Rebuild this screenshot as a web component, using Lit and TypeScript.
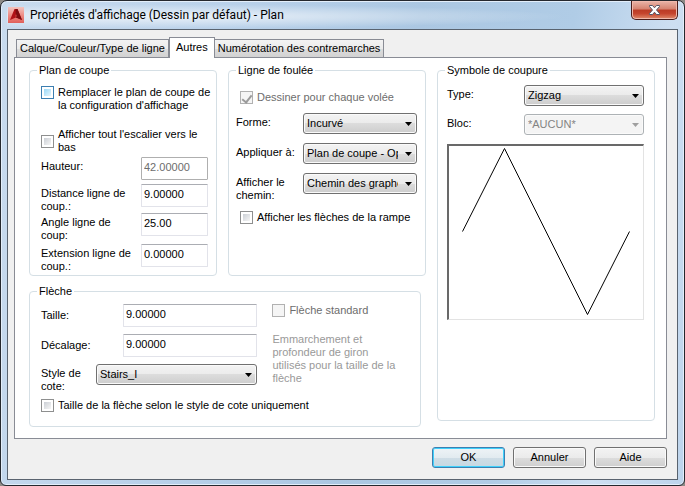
import { LitElement, html, css } from "lit";
import { customElement, property } from "lit/decorators.js";

const controls = css`
  * {
    box-sizing: border-box;
  }
  input,
  select,
  button {
    font: inherit;
    color: #000;
    margin: 0;
  }
`;

@customElement("check-option")
class CheckOption extends LitElement {
  @property() label = "";
  @property({ type: Boolean }) checked = false;
  @property({ type: Boolean }) disabled = false;
  @property({ type: Boolean }) hot = false;
  @property({ type: Boolean }) middle = false;

  static styles = [
    controls,
    css`
      :host {
        display: block;
      }
      label {
        display: flex;
        align-items: flex-start;
        gap: 4px;
      }
      .middle {
        align-items: center;
      }
      .off {
        color: #6d6d6d;
      }
      .box {
        appearance: none;
        flex: none;
        width: 13px;
        height: 13px;
        border: 1px solid #8e8f8f;
        background: linear-gradient(135deg, #cbcfd5, #f6f6f6) content-box #f4f4f4;
        padding: 2px;
        display: grid;
      }
      .hot .box {
        border-color: #3c7fb1;
        background: linear-gradient(135deg, #9ad8f7, #e6f6fd) content-box #def4fd;
      }
      .off .box {
        border-color: #b1b1b1;
        background: #f5f5f5;
        padding: 0;
      }
      .box:checked::after {
        content: "";
        width: 4px;
        height: 8px;
        border: solid #9b9b9b;
        border-width: 0 2px 2px 0;
        transform: rotate(38deg);
        place-self: center;
      }
    `,
  ];

  render() {
    const cls = [this.hot ? "hot" : "", this.disabled ? "off" : "", this.middle ? "middle" : ""].join(" ");
    return html`<label class=${cls}>
      <input class="box" type="checkbox" .checked=${this.checked} ?disabled=${this.disabled} />
      <span>${this.label}</span>
    </label>`;
  }
}

@customElement("form-field")
class FormField extends LitElement {
  @property() label = "";
  @property() value = "";
  @property() kind: "text" | "select" = "text";
  @property({ type: Boolean }) disabled = false;

  static styles = [
    controls,
    css`
      :host {
        display: grid;
        grid-template-columns: var(--label, 100px) 1fr;
        align-items: start;
      }
      label {
        padding: var(--drop, 3px) 4px 0 0;
      }
      .text {
        width: 100%;
        height: 23px;
        padding: 0 2px 3px;
        background: #fff;
        border: 1px solid #e2e3ea;
        border-top-color: #abadb3;
        border-radius: 1px;
      }
      .text:disabled {
        border-color: #afafaf;
        color: #6d6d6d;
      }
      .combo {
        display: grid;
        grid-template-columns: 1fr 18px;
        align-items: center;
        min-width: 0;
      }
      .list {
        appearance: none;
        grid-area: 1 / 1 / 2 / 3;
        width: 100%;
        height: 21px;
        padding: 0 18px 0 3px;
        border: 1px solid #707070;
        border-radius: 3px;
        background: linear-gradient(#f3f3f3, #ebebeb 50%, #dcdcdc 50%, #cdcdcd);
        box-shadow: inset 0 0 0 1px #fafafa;
      }
      .list:disabled {
        border-color: #adb2b5;
        background: #f4f4f4;
        color: #838383;
        opacity: 1;
      }
      .arrow {
        grid-area: 1 / 2;
        width: 7px;
        height: 4px;
        margin-left: 6px;
        pointer-events: none;
        fill: #000;
      }
      .list:disabled + .arrow {
        fill: #9f9f9f;
      }
    `,
  ];

  render() {
    return html`
      <label for="field">${this.label}</label>
      ${this.kind === "text"
        ? html`<input id="field" class="text" .value=${this.value} ?disabled=${this.disabled} />`
        : html`<div class="combo">
            <select id="field" class="list" ?disabled=${this.disabled}>
              <option>${this.value}</option>
            </select>
            <svg class="arrow" viewBox="0 0 7 4"><path d="M0 0H7L3.500 4Z" /></svg>
          </div>`}
    `;
  }
}

@customElement("app-root")
class AppRoot extends LitElement {
  static styles = [
    controls,
    css`
      :host {
        display: block;
        font: 11px/13px "Liberation Sans", Arial, sans-serif;
        color: #000;
        background: #8d8a86;
      }
      .window {
        min-height: 100vh;
        display: flex;
        flex-direction: column;
        padding: 0 6px 5px;
        border: 1px solid #25282e;
        border-radius: 7px 7px 6px 6px;
        background: linear-gradient(100deg, #c9dbee, #b9d1ea 30%, #abc7e2 55%, #b0cce6 75%, #cddff2 88%, #bdd4ec);
        box-shadow: inset 0 0 0 1px #e3eefa;
      }
      .title {
        display: flex;
        align-items: center;
        height: 28px;
        padding: 0 0 0 1px;
        background: radial-gradient(ellipse at 25% 55%, #ffffffb0, #ffffff00 55%);
      }
      .logo {
        width: 16px;
        height: 16px;
        margin-right: 6px;
      }
      .caption {
        flex: 1;
        margin: 0;
        font: 12px/16px Roboto, "Open Sans", sans-serif;
      }
      .close {
        align-self: flex-start;
        width: 47px;
        height: 19px;
        padding: 0;
        display: grid;
        place-items: center;
        border: 1px solid #4a1d1b;
        border-top: 0;
        border-radius: 0 0 5px 5px;
        background: linear-gradient(#e9b5a9, #d5826f 45%, #bb3b25 50%, #c5452e 70%, #e08b6c);
        box-shadow: inset 0 0 0 1px #f0b9ac;
      }
      .client {
        flex: 1;
        display: flex;
        flex-direction: column;
        padding: 7px 10px 11px 6px;
        border: 1px solid #59636f;
        background: #f0f0f0;
      }
      .tabs {
        display: flex;
        align-items: flex-end;
        padding-left: 2px;
      }
      .tab {
        height: 18px;
        padding: 0 3px;
        border: 1px solid #898c95;
        border-bottom: 0;
        background: linear-gradient(#f3f3f3, #ebebeb 50%, #dddddd 50%, #d2d2d2);
        white-space: nowrap;
      }
      .tab + .tab {
        border-left: 0;
      }
      .tab.current {
        height: 21px;
        margin-bottom: -1px;
        padding: 0 6px 2px;
        border-left: 1px solid #898c95;
        background: #fff;
        z-index: 1;
      }
      .panel {
        flex: 1;
        display: grid;
        grid-template-columns: 397fr 218fr;
        align-items: start;
        gap: 11px;
        padding: 6px 11px 11px 14px;
        border: 1px solid #898c95;
        background: #fff;
      }
      .left {
        display: grid;
        grid-template-columns: 188fr 198fr;
        gap: 9px 11px;
      }
      fieldset {
        margin: 0;
        min-width: 0;
        padding: 0 8px 8px 11px;
        border: 1px solid #d5dfe5;
        border-radius: 4px;
      }
      legend {
        margin-left: -4px;
        padding: 0 2px;
      }
      .stack {
        display: grid;
      }
      .cut {
        padding-top: 9px;
        margin-right: -6px;
      }
      .cut check-option {
        height: 42px;
      }
      .numbers {
        grid-template-rows: 27px 29px 31px 23px;
        margin-top: -13px;
      }
      .walk {
        --label: 67px;
        padding-top: 14px;
        row-gap: 9px;
      }
      .walk form-field {
        margin-left: -4px;
      }
      .symbol {
        height: 357px;
        padding-left: 9px;
      }
      .symbol legend {
        margin-left: -2px;
      }
      .break {
        --label: 77px;
        padding: 8px 2px 0 0;
        row-gap: 8px;
      }
      .preview {
        width: 100%;
        display: block;
        margin-top: 1px;
        border: 1px solid #e3e3e3;
        border-top: 2px solid #696969;
        border-left: 2px solid #696969;
      }
      .preview path {
        fill: none;
        stroke: #000;
      }
      .arrowhead {
        grid-column: 1 / 3;
        margin-right: 5px;
      }
      .columns {
        display: grid;
        grid-template-columns: 217fr 140fr;
        column-gap: 15px;
        padding-top: 6px;
      }
      .sizes {
        --label: 82px;
        --drop: 5px;
        row-gap: 7px;
      }
      .style {
        --label: 55px;
        --drop: 3px;
      }
      .hint {
        margin: 16px 12px 0 0;
        color: #999;
      }
      .whole {
        margin: 6px 0;
      }
      .buttons {
        display: flex;
        justify-content: flex-end;
        gap: 8px;
        padding-top: 8px;
      }
      .push {
        width: 73px;
        height: 21px;
        padding: 0;
        border: 1px solid #707070;
        border-radius: 3px;
        background: linear-gradient(#f3f3f3, #ebebeb 50%, #dddddd 50%, #cfcfcf);
        box-shadow: inset 0 0 0 1px #fafafa;
      }
      .push.main {
        border-color: #3c7fb1;
        background: linear-gradient(#eef3f6, #e2ebf0 50%, #cfdde6 50%, #c6d8e2);
        box-shadow: inset 0 0 0 1px #3fd0fb;
      }
    `,
  ];

  render() {
    return html`
      <main class="window">
        <header class="title">
          <svg class="logo" viewBox="0 0 16 16" aria-hidden="true">
            <defs>
              <linearGradient id="tile" x2="0" y2="1">
                <stop offset="0" stop-color="#f3c4be" />
                <stop offset="0.5" stop-color="#ee8d86" />
                <stop offset="1" stop-color="#e0605a" />
              </linearGradient>
            </defs>
            <rect width="16" height="16" fill="url(#tile)" />
            <path d="M2 13L6.500 2H9.500L14 13L8 10.500Z" fill="#b01217" />
            <path d="M7.500 2H9.500L14 13L8 10.500Z" fill="#7d0c10" />
            <path d="M8 7L7 9.500H9Z" fill="#c9403c" />
          </svg>
          <h1 class="caption">Propriétés d'affichage (Dessin par défaut) - Plan</h1>
          <button class="close" aria-label="Fermer">
            <svg width="13" height="12" viewBox="0 0 13 12">
              <path
                d="M1.500 1.500H4.500L6.500 3.800L8.500 1.500H11.500V2.500L8.500 6L11.500 9.500V10.500H8.500L6.500 8.200L4.500 10.500H1.500V9.500L4.500 6L1.500 2.500Z"
                fill="#fff"
                stroke="#535666"
              />
            </svg>
          </button>
        </header>
        <div class="client">
          <div class="tabs" role="tablist">
            <button class="tab" role="tab">Calque/Couleur/Type de ligne</button>
            <button class="tab current" role="tab" aria-selected="true">Autres</button>
            <button class="tab" role="tab">Numérotation des contremarches</button>
          </div>
          <section class="panel" role="tabpanel">
            <div class="left">
              <fieldset>
                <legend>Plan de coupe</legend>
                <div class="stack cut">
                  <check-option hot label="Remplacer le plan de coupe de la configuration d'affichage"></check-option>
                  <check-option middle label="Afficher tout l'escalier vers le bas"></check-option>
                </div>
                <div class="stack numbers">
                  <form-field disabled label="Hauteur:" value="42.00000"></form-field>
                  <form-field label="Distance ligne de coup.:" value="9.00000"></form-field>
                  <form-field label="Angle ligne de coup:" value="25.00"></form-field>
                  <form-field label="Extension ligne de coup.:" value="0.00000"></form-field>
                </div>
              </fieldset>
              <fieldset>
                <legend>Ligne de foulée</legend>
                <div class="stack walk">
                  <check-option checked disabled label="Dessiner pour chaque volée"></check-option>
                  <form-field kind="select" label="Forme:" value="Incurvé"></form-field>
                  <form-field kind="select" label="Appliquer à:" value="Plan de coupe - Options"></form-field>
                  <form-field kind="select" label="Afficher le chemin:" value="Chemin des graphes"></form-field>
                  <check-option label="Afficher les flèches de la rampe"></check-option>
                </div>
              </fieldset>
              <fieldset class="arrowhead">
                <legend>Flèche</legend>
                <div class="columns">
                  <div class="stack sizes">
                    <form-field label="Taille:" value="9.00000"></form-field>
                    <form-field label="Décalage:" value="9.00000"></form-field>
                    <form-field class="style" kind="select" label="Style de cote:" value="Stairs_I"></form-field>
                  </div>
                  <div>
                    <check-option disabled label="Flèche standard"></check-option>
                    <p class="hint">Emmarchement et profondeur de giron utilisés pour la taille de la flèche</p>
                  </div>
                </div>
                <check-option class="whole" label="Taille de la flèche selon le style de cote uniquement"></check-option>
              </fieldset>
            </div>
            <fieldset class="symbol">
              <legend>Symbole de coupure</legend>
              <div class="stack break">
                <form-field kind="select" label="Type:" value="Zigzag"></form-field>
                <form-field kind="select" disabled label="Bloc:" value="*AUCUN*"></form-field>
                <svg class="preview" viewBox="0 0 194 173" role="img" aria-label="Zigzag">
                  <path d="M13.500 85.500L55.500 2.500L138.500 168.500L180.500 85.500" />
                </svg>
              </div>
            </fieldset>
          </section>
          <footer class="buttons">
            <button class="push main">OK</button>
            <button class="push">Annuler</button>
            <button class="push">Aide</button>
          </footer>
        </div>
      </main>
    `;
  }
}
